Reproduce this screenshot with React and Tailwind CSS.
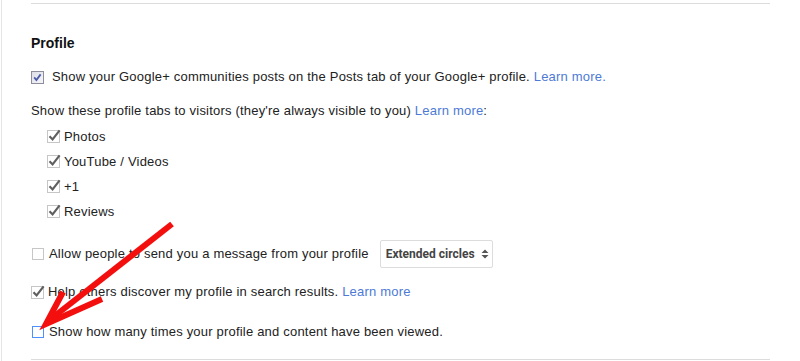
import React from "react";

const font = { fontFamily: '"Liberation Sans", Arial, sans-serif' };

const GrayCheck = ({ checked }) => (
  <svg width="16" height="16" viewBox="0 0 16 16" className="shrink-0 -mt-[3px]">
    <rect x="0.5" y="3.5" width="12" height="12" fill="#fff" stroke="#c6c6c6" />
    {checked && (
      <path d="M2.5 9.2 L5.6 12.4 L12.6 3.4" fill="none" stroke="#5f5f5f" strokeWidth="2.2" />
    )}
  </svg>
);

const OldCheck = () => (
  <svg width="13" height="13" viewBox="0 0 13 13" className="shrink-0">
    <defs>
      <linearGradient id="og" x1="0" y1="0" x2="1" y2="1">
        <stop offset="0" stopColor="#dcdce6" />
        <stop offset="1" stopColor="#f7f7fb" />
      </linearGradient>
    </defs>
    <rect x="0.5" y="0.5" width="12" height="12" fill="url(#og)" stroke="#8d8d9c" />
    <path d="M3.2 6.4 L5.4 9 L9.6 3.4" fill="none" stroke="#4a5ba8" strokeWidth="1.8" />
  </svg>
);

const Link = ({ children }) => <span className="text-[#4d7ad6]">{children}</span>;

const SubItem = ({ label }) => (
  <div className="flex items-center h-[25px] pl-[16px]">
    <GrayCheck checked />
    <span className="ml-[1px]">{label}</span>
  </div>
);

export default function App() {
  return (
    <div
      className="relative w-[800px] h-[361px] bg-white overflow-hidden text-[13px] tracking-[0.2px] text-[#222]"
      style={font}
    >
      <div className="absolute left-[1px] top-0 h-full w-[1px] bg-[#e6e6e6]" />
      <div className="ml-[31px] w-[739px] pt-[3px]">
        <div className="h-[1px] bg-[#dcdcdc]" />
        <h2 className="mt-[30px] text-[14px] font-bold text-[#111] leading-[18px] tracking-normal">Profile</h2>
        <div className="mt-[16px] flex items-center h-[18px]">
          <OldCheck />
          <span className="ml-[8px]">
            Show your Google+ communities posts on the Posts tab of your Google+ profile.{" "}
            <Link>Learn more.</Link>
          </span>
        </div>
        <div className="mt-[16px] h-[18px] leading-[18px]">
          Show these profile tabs to visitors (they're always visible to you) <Link>Learn more</Link>:
        </div>
        <div className="mt-[4px]">
          <SubItem label="Photos" />
          <SubItem label="YouTube / Videos" />
          <SubItem label="+1" />
          <SubItem label="Reviews" />
        </div>
        <div className="mt-[16px] flex items-center h-[28px]">
          <span className="w-[12px] h-[12px] border border-[#c6c6c6] bg-white shrink-0 ml-[1px]" />
          <span className="ml-[5px] whitespace-nowrap">Allow people to send you a message from your profile</span>
          <div
            className="ml-[11px] h-[28px] w-[113px] shrink-0 whitespace-nowrap border border-[#dcdcdc] rounded-[2px] flex items-center pl-[5px] text-[12px] font-bold text-[#444] tracking-normal"
            style={{ fontFamily: 'Roboto, "Liberation Sans", sans-serif' }}
          >
            Extended circles
            <svg width="8" height="12" viewBox="0 0 8 12" className="ml-[6px] shrink-0">
              <path d="M0.5 5 L4 1.5 L7.5 5 Z M0.5 7 L4 10.5 L7.5 7 Z" fill="#555" />
            </svg>
          </div>
        </div>
        <div className="mt-[15px] flex items-center h-[18px]">
          <GrayCheck checked />
          <span className="ml-[1px]">
            Help others discover my profile in search results. <Link>Learn more</Link>
          </span>
        </div>
        <div className="mt-[22px] flex items-center h-[18px]">
          <span className="w-[12px] h-[12px] border border-[#4d90fe] bg-white shrink-0 ml-[1px]" />
          <span className="ml-[5px]">Show how many times your profile and content have been viewed.</span>
        </div>
        <div className="mt-[18px] h-[1px] bg-[#dcdcdc]" />
      </div>
      <svg className="absolute left-0 top-0" width="800" height="361" viewBox="0 0 800 361">
        <g stroke="#f40f0f" strokeWidth="6" fill="none" strokeLinecap="butt" strokeLinejoin="miter">
          <path d="M172 224 L47 322" />
          <path d="M63 292 L46 324 L102 299" />
        </g>
      </svg>
    </div>
  );
}
